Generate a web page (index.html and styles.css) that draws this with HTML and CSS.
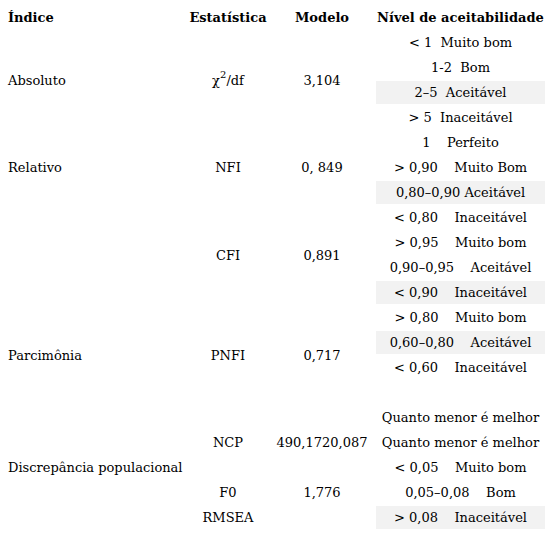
FILE: index.html
```html
<!DOCTYPE html>
<html>

<head>
  <meta charset="UTF-8">
  <title>Índices de ajuste</title>
  <link rel="stylesheet" href="styles.css">
</head>

<body>
  <table class="fit-table">
    <colgroup>
      <col class="col-index">
      <col class="col-stat">
      <col class="col-model">
      <col class="col-level">
    </colgroup>
    <thead>
      <tr>
        <th class="cell-left">Índice</th>
        <th>Estatística</th>
        <th>Modelo</th>
        <th>Nível de aceitabilidade</th>
      </tr>
    </thead>
    <tbody>
      <tr>
        <td class="cell-left" rowspan="4">Absoluto</td>
        <td rowspan="4">χ<sup class="sup">2</sup>/df</td>
        <td rowspan="4">3,104</td>
        <td>&lt; 1  Muito bom</td>
      </tr>
      <tr><td>1-2  Bom</td></tr>
      <tr><td class="shade">2–5  Aceitável</td></tr>
      <tr><td>&gt; 5  Inaceitável</td></tr>

      <tr>
        <td class="cell-left" rowspan="3">Relativo</td>
        <td rowspan="3">NFI</td>
        <td rowspan="3">0, 849</td>
        <td>1    Perfeito</td>
      </tr>
      <tr><td>&gt; 0,90    Muito Bom</td></tr>
      <tr><td class="shade">0,80–0,90 Aceitável</td></tr>

      <tr>
        <td class="cell-left" rowspan="4"></td>
        <td rowspan="4">CFI</td>
        <td rowspan="4">0,891</td>
        <td>&lt; 0,80    Inaceitável</td>
      </tr>
      <tr><td>&gt; 0,95    Muito bom</td></tr>
      <tr><td>0,90–0,95    Aceitável</td></tr>
      <tr><td class="shade">&lt; 0,90    Inaceitável</td></tr>

      <tr>
        <td class="cell-left" rowspan="4">Parcimônia</td>
        <td rowspan="4">PNFI</td>
        <td rowspan="4">0,717</td>
        <td>&gt; 0,80    Muito bom</td>
      </tr>
      <tr><td class="shade">0,60–0,80    Aceitável</td></tr>
      <tr><td>&lt; 0,60    Inaceitável</td></tr>
      <tr><td></td></tr>

      <tr>
        <td class="cell-left" rowspan="5">Discrepância populacional</td>
        <td rowspan="3">NCP</td>
        <td rowspan="3">490,1720,087</td>
        <td>Quanto menor é melhor</td>
      </tr>
      <tr><td>Quanto menor é melhor</td></tr>
      <tr><td>&lt; 0,05    Muito bom</td></tr>
      <tr>
        <td>F0</td>
        <td>1,776</td>
        <td>0,05–0,08    Bom</td>
      </tr>
      <tr>
        <td>RMSEA</td>
        <td></td>
        <td class="shade">&gt; 0,08    Inaceitável</td>
      </tr>
    </tbody>
  </table>
</body>

</html>
```

FILE: styles.css
```css
body {
  margin: 0;
  background: #fff;
  color: #000;
  font-family: "DejaVu Serif", "Liberation Serif", serif;
  font-size: 13px;
}

.fit-table {
  margin: 4px 0 0 2px;
  border-collapse: separate;
  border-spacing: 2px;
  table-layout: fixed;
  width: 545px;
}

.col-index {
  width: 182px;
}

.col-stat {
  width: 80px;
}

.col-model {
  width: 104px;
}

.col-level {
  width: 169px;
}

.fit-table th,
.fit-table td {
  height: 23px;
  padding: 0 1px;
  line-height: 23px;
  text-align: center;
  vertical-align: middle;
  white-space: pre;
}

.fit-table th {
  font-weight: bold;
}

.fit-table .cell-left {
  padding-left: 4px;
  text-align: left;
}

.shade {
  background: #f2f2f2;
}

.sup {
  font-size: 10px;
  line-height: 0;
  vertical-align: 7px;
}
```
